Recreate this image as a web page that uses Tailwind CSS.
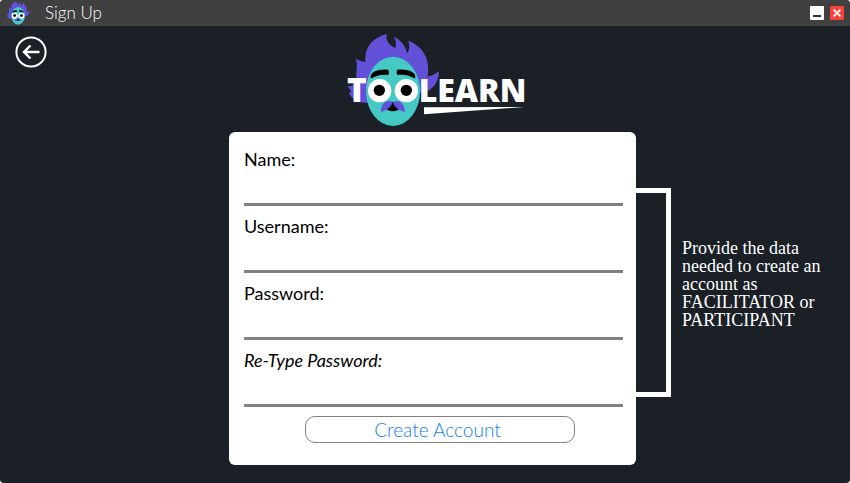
<!DOCTYPE html>
<html lang="en">
<head>
<meta charset="utf-8">
<meta name="viewport" content="width=device-width, initial-scale=1">
<title>Sign Up</title>
<script src="https://cdn.jsdelivr.net/npm/@tailwindcss/browser@4"></script>
</head>
<body class="bg-white">
<svg class="hidden" aria-hidden="true">
  <symbol id="mascot" viewBox="18 14 280 284">
    <path fill="#6250d8" d="M78 224C54 224 36 214 26 194C38 196 32 186 22 174C38 178 50 164 50 154C46 132 56 112 46 90C54 98 64 100 76 102C72 62 94 30 140 18C136 34 144 50 166 60C170 48 168 38 161 25C180 36 196 50 201 76C208 68 210 54 205 38C246 54 272 90 263 146C276 144 286 138 297 130C296 166 276 192 240 194L236 226Z"/>
    <ellipse cx="159" cy="190" rx="81" ry="104" fill="#45c9c5"/>
    <path d="M92 149C90 130 118 122 144 125Q150 132 144 141C124 138 108 143 97 150Q94 152 92 149Z"/>
    <path d="M226 149C228 130 200 122 172 125Q167 132 172 141C194 138 210 143 221 150Q224 152 226 149Z"/>
    <circle cx="119" cy="188" r="35" fill="#fff"/>
    <circle cx="199" cy="188" r="35" fill="#fff"/>
    <circle cx="118" cy="187" r="17"/>
    <circle cx="199" cy="187" r="17"/>
    <path d="M158 221C148 232 134 242 143 246Q158 254 174 246C183 242 168 232 158 221Z"/>
    <path fill="#6250d8" d="M158 221C138 213 122 227 123 253C136 246 153 242 158 221ZM158 221C178 213 195 227 195 253C181 246 163 242 158 221Z"/>
  </symbol>
</svg>
<div class="flex min-h-screen flex-col overflow-hidden rounded-sm bg-[#1b2027] font-[Lato,sans-serif]">
  <header class="flex h-[26px] items-center bg-[#404040] pr-[6px] pl-[6px] text-white">
    <svg class="h-6 w-6" aria-hidden="true"><use href="#mascot"/></svg>
    <h1 class="ml-[15px] flex-1 text-[17px] leading-6 font-light">Sign Up</h1>
    <button type="button" aria-label="Minimize" class="mr-[6px] flex h-[14px] w-[14px] items-end justify-center rounded-[1px] bg-white pb-[3px]"><span class="h-[2px] w-2 bg-[#333]"></span></button>
    <button type="button" aria-label="Close" class="flex h-[14px] w-[14px] items-center justify-center rounded-[1px] bg-[#f9423a]">
      <svg class="h-2 w-2" viewBox="0 0 8 8" stroke="#fff" stroke-width="1.8" aria-hidden="true"><path d="M.5 .5L7.500 7.500M7.500 .5L.5 7.500"/></svg>
    </button>
  </header>
  <main class="grid flex-1 grid-cols-[229fr_407fr_214fr] pb-[18px]">
    <div class="pt-[10px] pl-[15px]">
      <button type="button" aria-label="Back" class="block">
        <svg class="h-8 w-8" viewBox="0 0 32 32" fill="none" stroke="#fff" stroke-width="2" aria-hidden="true"><circle cx="16" cy="16" r="14.6"/><path stroke-width="2.400" d="M24.5 16H9M15.500 9.5L9 16L15.500 22.500"/></svg>
      </button>
    </div>
    <div>
      <div class="flex justify-center pt-[2px] pl-1">
        <svg class="h-[104px] w-[190px]" viewBox="0 0 570 312" role="img" aria-label="Toolearn">
          <use href="#mascot" x="18" y="14" width="280" height="284"/>
          <g fill="#fff" class="font-['Open_Sans',sans-serif] font-extrabold">
            <text x="21" y="221" font-size="100">T</text>
            <text x="236" y="221" font-size="96">LEARN</text>
          </g>
          <path fill="#fff" d="M252 238L552 237L252 259Z"/>
        </svg>
      </div>
      <form class="rounded-[6px] bg-white pt-[14px] pr-[13px] pb-[22px] pl-[15px] text-[18px] text-black">
        <div class="flex h-[67px] flex-col"><label for="name" class="leading-[26px]">Name:</label><input id="name" type="text" class="mb-[7px] min-h-0 w-full flex-1 border-b-3 border-[#808080] outline-none"></div>
        <div class="flex h-[67px] flex-col"><label for="username" class="leading-[26px]">Username:</label><input id="username" type="text" class="mb-[7px] min-h-0 w-full flex-1 border-b-3 border-[#808080] outline-none"></div>
        <div class="flex h-[67px] flex-col"><label for="password" class="leading-[26px]">Password:</label><input id="password" type="password" class="mb-[7px] min-h-0 w-full flex-1 border-b-3 border-[#808080] outline-none"></div>
        <div class="flex h-[67px] flex-col"><label for="retype" class="leading-[26px] italic">Re-Type Password:</label><input id="retype" type="password" class="mb-[7px] min-h-0 w-full flex-1 border-b-3 border-[#808080] outline-none"></div>
        <div class="flex justify-center pt-[2px] pl-3">
          <button type="submit" class="h-[27px] w-[270px] rounded-[10px] border border-[#808080] pr-1 text-[19px] leading-6 font-light text-[#1080f0]">Create Account</button>
        </div>
      </form>
    </div>
    <aside class="flex items-start pt-[162px]">
      <div class="h-[209px] w-[35px] shrink-0 rounded-r-[1px] border-y-5 border-r-5 border-white"></div>
      <p class="mt-[51px] ml-[11px] w-[150px] font-['Liberation_Serif',serif] text-[18px] leading-[18px] text-white">Provide the data needed to create an account as FACILITATOR or PARTICIPANT</p>
    </aside>
  </main>
</div>
</body>
</html>
